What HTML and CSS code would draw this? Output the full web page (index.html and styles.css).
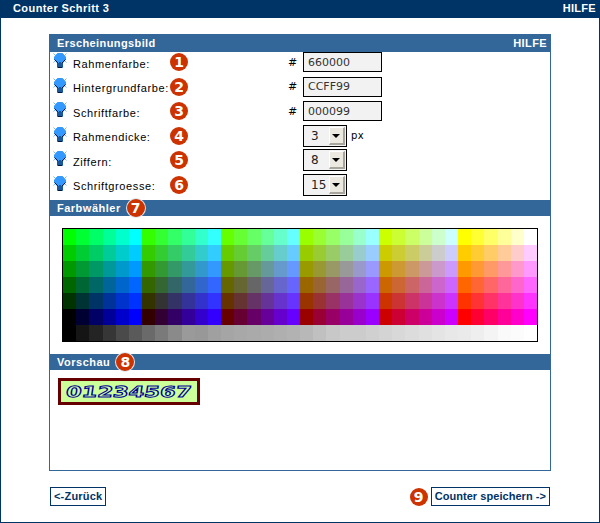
FILE: index.html
```html
<!DOCTYPE html>
<html lang="de">
<head>
  <meta charset="UTF-8">
  <title>Counter Schritt 3</title>
  <link rel="stylesheet" href="styles.css">
</head>
<body>
  <div class="page">
    <div class="titlebar">
      <span>Counter Schritt 3</span>
      <span class="help">HILFE</span>
    </div>

    <div class="panel">
      <div class="panel-head">
        <span>Erscheinungsbild</span>
        <span>HILFE</span>
      </div>

      <!-- Optionen -->
      <div class="rows">
        <div class="row">
          <svg class="bulb" viewBox="0 0 14 16"><use href="#bulb"></use></svg>
          <label class="name">Rahmenfarbe:</label>
          <span class="badge">1</span>
          <span class="hash">#</span>
          <input class="colorinput" type="text" value="660000">
        </div>
        <div class="row">
          <svg class="bulb" viewBox="0 0 14 16"><use href="#bulb"></use></svg>
          <label class="name">Hintergrundfarbe:</label>
          <span class="badge">2</span>
          <span class="hash">#</span>
          <input class="colorinput" type="text" value="CCFF99">
        </div>
        <div class="row">
          <svg class="bulb" viewBox="0 0 14 16"><use href="#bulb"></use></svg>
          <label class="name">Schriftfarbe:</label>
          <span class="badge">3</span>
          <span class="hash">#</span>
          <input class="colorinput" type="text" value="000099">
        </div>
        <div class="row">
          <svg class="bulb" viewBox="0 0 14 16"><use href="#bulb"></use></svg>
          <label class="name">Rahmendicke:</label>
          <span class="badge">4</span>
          <span class="hash"></span>
          <div class="selectbox"><span class="selectval">3</span><span class="selectbtn"></span></div>
          <span class="unit">px</span>
        </div>
        <div class="row">
          <svg class="bulb" viewBox="0 0 14 16"><use href="#bulb"></use></svg>
          <label class="name">Ziffern:</label>
          <span class="badge">5</span>
          <span class="hash"></span>
          <div class="selectbox"><span class="selectval">8</span><span class="selectbtn"></span></div>
        </div>
        <div class="row">
          <svg class="bulb" viewBox="0 0 14 16"><use href="#bulb"></use></svg>
          <label class="name">Schriftgroesse:</label>
          <span class="badge">6</span>
          <span class="hash"></span>
          <div class="selectbox"><span class="selectval">15</span><span class="selectbtn"></span></div>
        </div>
      </div>

      <!-- Farbwaehler -->
      <div class="section-head">Farbwähler <span class="badge badge-ring">7</span></div>
      <div class="palette-wrap">
        <div id="palette" class="palette"></div>
      </div>

      <!-- Vorschau -->
      <div class="section-head">Vorschau <span class="badge badge-ring">8</span></div>
      <div class="preview">
        <div class="counter"><span class="digits">01234567</span></div>
      </div>
    </div>

    <div class="footer">
      <a class="btn btn-back" href="#">&lt;-Zurück</a>
      <div class="footer-right">
        <span class="badge">9</span>
        <a class="btn" href="#">Counter speichern -&gt;</a>
      </div>
    </div>
  </div>

  <svg class="defs" width="0" height="0">
    <symbol id="bulb" viewBox="0 0 14 16">
      <path d="M0.500 0.500l2 2M13.500 0.500l-2 2M0.500 9.500l2-2M13.500 9.500l-2-2" stroke="#7ab8f0" stroke-width="1" fill="none"/>
      <path d="M4.500 0.500h5l3 3.500v2.500l-3 3.500v4.500h-5v-4.500l-3-3.500v-2.500z" fill="#3399ff" stroke="#3399ff" stroke-width="1"/>
      <path d="M1.500 6.500l3.500 3.500v4.500h4v-4.500l3.500-3.500M7 9v5.500" fill="none" stroke="#00163a" stroke-width="1"/>
    </symbol>
  </svg>

  <script src="palette.js"></script>
</body>
</html>
```

FILE: styles.css
```css
body {
  margin: 0;
  background: #fff;
  color: #000;
  font-family: "Liberation Sans", Arial, sans-serif;
  font-size: 11px;
}

.page {
  box-sizing: border-box;
  width: 600px;
  height: 523px;
  border: 1px solid #003366;
  border-top: 0;
}

.titlebar {
  display: flex;
  justify-content: space-between;
  height: 18px;
  line-height: 17px;
  padding: 0 3px 0 12px;
  background: #003366;
  color: #fff;
  font-weight: bold;
  letter-spacing: 0.42px;
}
.titlebar .help { letter-spacing: 0.3px; }

/* Panel */
.panel {
  box-sizing: border-box;
  width: 502px;
  height: 437px;
  margin: 16px 0 0 48px;
  border: 1px solid #336699;
  border-top: 0;
}
.panel-head {
  display: flex;
  justify-content: space-between;
  height: 18px;
  line-height: 18px;
  padding: 0 3px 0 7px;
  background: #336699;
  color: #fff;
  font-weight: bold;
  letter-spacing: 0.4px;
}

/* Option rows */
.rows {
  margin: -2px 0 3px;
}
.row {
  display: flex;
  align-items: center;
  height: 24.5px;
  padding-left: 3px;
  letter-spacing: 0.6px;
}
.bulb {
  flex: none;
  width: 14px;
  height: 16px;
  margin: -2px 6px 0 0;
}
.name {
  flex: none;
  width: 97px;
  padding-top: 3px;
}
.badge {
  display: inline-block;
  flex: none;
  width: 18px;
  height: 18px;
  line-height: 18px;
  border-radius: 50%;
  background: #cc3300;
  color: #fff;
  font-family: "DejaVu Sans", sans-serif;
  font-size: 14px;
  font-weight: bold;
  text-align: center;
  letter-spacing: 0;
}
.badge-ring {
  box-shadow: 0 0 0 1px #dfe8f0;
}
.hash {
  flex: none;
  width: 15px;
  margin-left: 100px;
  font-family: "DejaVu Sans", sans-serif;
  font-size: 11px;
  letter-spacing: 0;
}
.colorinput {
  box-sizing: border-box;
  width: 79px;
  height: 20px;
  margin: 0;
  padding: 0 4px;
  border: 1px solid #000;
  border-radius: 0;
  outline: 0;
  background: #f2f2f2;
  color: #333;
  font-family: "DejaVu Sans", sans-serif;
  font-size: 11px;
}

/* Drawn like the old toolkit select */
.selectbox {
  box-sizing: border-box;
  display: flex;
  justify-content: space-between;
  align-items: center;
  width: 44px;
  height: 22px;
  padding: 1px;
  border: 1px solid #000;
  background: #f2f2f2;
  color: #222;
  font-family: "DejaVu Sans", sans-serif;
  font-size: 12px;
  letter-spacing: 0;
}
.selectval { padding-left: 6px; }
.selectbtn {
  box-sizing: border-box;
  position: relative;
  width: 16px;
  height: 18px;
  background: #ece9e0;
  border-right: 2px solid #a8a69c;
  border-bottom: 2px solid #a8a69c;
  border-top: 1px solid #fff;
  border-left: 1px solid #fff;
}
.selectbtn::after {
  content: "";
  position: absolute;
  left: 2px;
  top: 6px;
  border-top: 4px solid #000;
  border-left: 4px solid transparent;
  border-right: 4px solid transparent;
}
.unit {
  margin-left: 4px;
  font-family: "DejaVu Sans", sans-serif;
  font-size: 10px;
  letter-spacing: 0.5px;
}

/* Section bars */
.section-head {
  display: flex;
  align-items: center;
  height: 16px;
  padding-left: 7px;
  background: #336699;
  color: #fff;
  font-weight: bold;
  letter-spacing: 0.5px;
}
.section-head .badge { margin-left: 6px; }

/* Colour table */
.palette-wrap { padding: 12px; }
.palette {
  display: grid;
  grid-template-columns: repeat(36, 1fr);
  grid-auto-rows: 16px;
  width: 474px;
  border: 1px solid #000;
}

/* Preview */
.preview { padding: 8px 0 0 8px; }
.counter {
  box-sizing: border-box;
  display: flex;
  justify-content: center;
  align-items: center;
  width: 142px;
  height: 27px;
  padding-top: 1px;
  border: 3px solid #660000;
  background: #ccff99;
}
.digits {
  display: block;
  color: #ccff99;
  font-family: "DejaVu Sans", sans-serif;
  font-size: 15px;
  font-weight: bold;
  white-space: nowrap;
  -webkit-text-stroke: 1px #000099;
  transform: scaleX(1.5) skewX(-6deg);
}

/* Footer */
.footer {
  display: flex;
  justify-content: space-between;
  align-items: center;
  width: 500px;
  margin: 16px 0 0 49px;
}
.footer-right {
  display: flex;
  align-items: center;
  gap: 3px;
}
.btn {
  display: block;
  height: 17px;
  line-height: 17px;
  padding: 0 3px;
  border: 1px solid #003366;
  color: #003366;
  font-weight: bold;
  letter-spacing: 0.05px;
  text-decoration: none;
}
.btn-back { letter-spacing: 0.2px; }

.defs { position: absolute; }
```

FILE: palette.js
```js
// Build the colour table, 36 columns x 6 rows plus the grey row
var steps = ['00', '33', '66', '99', 'CC', 'FF'];
var greys = [0, 21, 36, 54, 74, 90, 106, 122, 138, 154, 152, 160, 165, 168, 170, 172, 175, 178,
  184, 192, 200, 204, 204, 208, 212, 216, 220, 224, 228, 232, 234, 238, 244, 250, 252, 255];
var palette = document.getElementById('palette');

function addCell(color) {
  var cell = document.createElement('div');
  cell.style.background = color;
  palette.appendChild(cell);
}

for (var g = 5; g >= 0; g--) {
  for (var r = 0; r < 6; r++) {
    for (var b = 0; b < 6; b++) {
      addCell('#' + steps[r] + steps[g] + steps[b]);
    }
  }
}
greys.forEach(function (v) {
  addCell('rgb(' + v + ',' + v + ',' + v + ')');
});
```
